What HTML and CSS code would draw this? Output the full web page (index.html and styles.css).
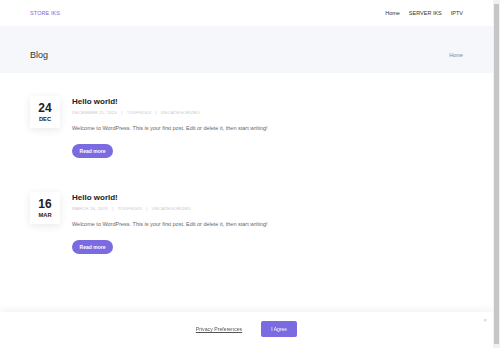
FILE: index.html
```html
<!DOCTYPE html>
<html lang="en">
<head>
  <meta charset="UTF-8" />
  <meta name="viewport" content="width=device-width, initial-scale=1.0"/>
  <title>Blog - STORE IKS</title>
  <link rel="stylesheet" href="styles.css">
</head>
<body>

  <header class="site-header">
    <div class="container header-inner">
      <a class="logo" href="#">STORE IKS</a>
      <nav class="nav">
        <a href="#">Home</a>
        <a href="#">SERVER IKS</a>
        <a href="#">IPTV</a>
      </nav>
    </div>
  </header>

  <section class="page-title">
    <div class="container title-inner">
      <h1>Blog</h1>
      <span class="crumb">Home</span>
    </div>
  </section>

  <main class="container posts">
    <article class="post">
      <div class="post-date">
        <span class="day">24</span>
        <span class="month">DEC</span>
      </div>
      <div class="post-body">
        <h2>Hello world!</h2>
        <div class="meta">December 21, 2024 <span>|</span> toufik003 <span>|</span> Uncategorized</div>
        <p class="excerpt">Welcome to WordPress. This is your first post. Edit or delete it, then start writing!</p>
        <a class="btn" href="#">Read more</a>
      </div>
    </article>

    <article class="post">
      <div class="post-date">
        <span class="day">16</span>
        <span class="month">MAR</span>
      </div>
      <div class="post-body">
        <h2>Hello world!</h2>
        <div class="meta">March 16, 2019 <span>|</span> toufik003 <span>|</span> Uncategorized</div>
        <p class="excerpt">Welcome to WordPress. This is your first post. Edit or delete it, then start writing!</p>
        <a class="btn" href="#">Read more</a>
      </div>
    </article>
  </main>

  <!-- Cookie bar -->
  <div class="cookie-bar">
    <a class="cookie-link" href="#">Privacy Preferences</a>
    <button class="cookie-btn">I Agree</button>
    <span class="cookie-close">&times;</span>
  </div>

  <div class="scrollbar"><div class="thumb"></div></div>

</body>
</html>
```

FILE: styles.css
```css
* { margin: 0; padding: 0; box-sizing: border-box; }

body {
  font-family: 'Liberation Sans', Arial, sans-serif;
  background: #fff;
  color: #333;
  width: 493px;
  min-height: 100vh;
}

a { text-decoration: none; color: inherit; }

.container {
  width: 433px;
  margin: 0 auto;
}

/* Header */
.site-header {
  height: 26px;
  background: #fff;
}

.header-inner {
  height: 100%;
  display: flex;
  align-items: center;
  justify-content: space-between;
}

.logo {
  font-size: 5.5px;
  color: #7a6ad8;
  letter-spacing: 0.1px;
}

.nav {
  display: flex;
  gap: 9px;
}

.nav a {
  font-size: 5.5px;
  color: #333;
}

/* Title band */
.page-title {
  height: 47px;
  background: #f5f7fa;
}

.title-inner {
  height: 100%;
  display: flex;
  align-items: center;
  justify-content: space-between;
  padding-top: 10px;
}

.page-title h1 {
  font-size: 9px;
  font-weight: 400;
  color: #333;
}

.crumb {
  font-size: 5.2px;
  color: #888;
}

/* Posts */
.posts { padding-top: 23px; }

.post {
  display: flex;
  align-items: flex-start;
  gap: 12px;
  margin-bottom: 34px;
}

.post-date {
  width: 30px;
  height: 32px;
  background: #fff;
  box-shadow: 0 2px 8px rgba(0,0,0,0.09);
  display: flex;
  flex-direction: column;
  align-items: center;
  justify-content: center;
  color: #222;
  font-weight: 700;
}

.day { font-size: 12px; line-height: 13px; }
.month { font-size: 5.8px; line-height: 8px; }

.post-body h2 {
  font-size: 8px;
  line-height: 12px;
  color: #222;
}

.meta {
  margin-top: 2px;
  font-size: 4.4px;
  line-height: 6px;
  color: #c8c8ce;
  text-transform: uppercase;
  letter-spacing: 0.1px;
}

.meta span { margin: 0 3px; }

.excerpt {
  margin-top: 8px;
  font-size: 5.5px;
  line-height: 8px;
  color: #666;
}

.btn {
  display: inline-flex;
  align-items: center;
  justify-content: center;
  margin-top: 12px;
  width: 41px;
  height: 14px;
  border-radius: 7px;
  background: #7b6be0;
  color: #fff;
  font-size: 5px;
  font-weight: 700;
}

/* Cookie bar */
.cookie-bar {
  position: fixed;
  left: 0; bottom: 0;
  width: 493px;
  height: 36px;
  background: #fff;
  box-shadow: 0 -3px 8px rgba(0,0,0,0.05);
  display: flex;
  align-items: center;
  justify-content: center;
  gap: 19px;
  padding-bottom: 2px;
}

.cookie-link {
  font-size: 5.2px;
  color: #555;
  text-decoration: underline;
}

.cookie-btn {
  width: 36px;
  height: 16px;
  border: none;
  border-radius: 2px;
  background: #7b6be0;
  color: #fff;
  font-family: inherit;
  font-size: 5px;
}

.cookie-close {
  position: absolute;
  right: 6px;
  top: 5px;
  font-size: 6px;
  color: #bbb;
}

/* Fake scrollbar */
.scrollbar {
  position: fixed;
  top: 0; right: 0;
  width: 7px;
  height: 100vh;
  background: #f1f1f1;
  padding: 4px 1px;
}

.thumb {
  width: 100%;
  height: 100%;
  background: #c6c6c6;
}
```
